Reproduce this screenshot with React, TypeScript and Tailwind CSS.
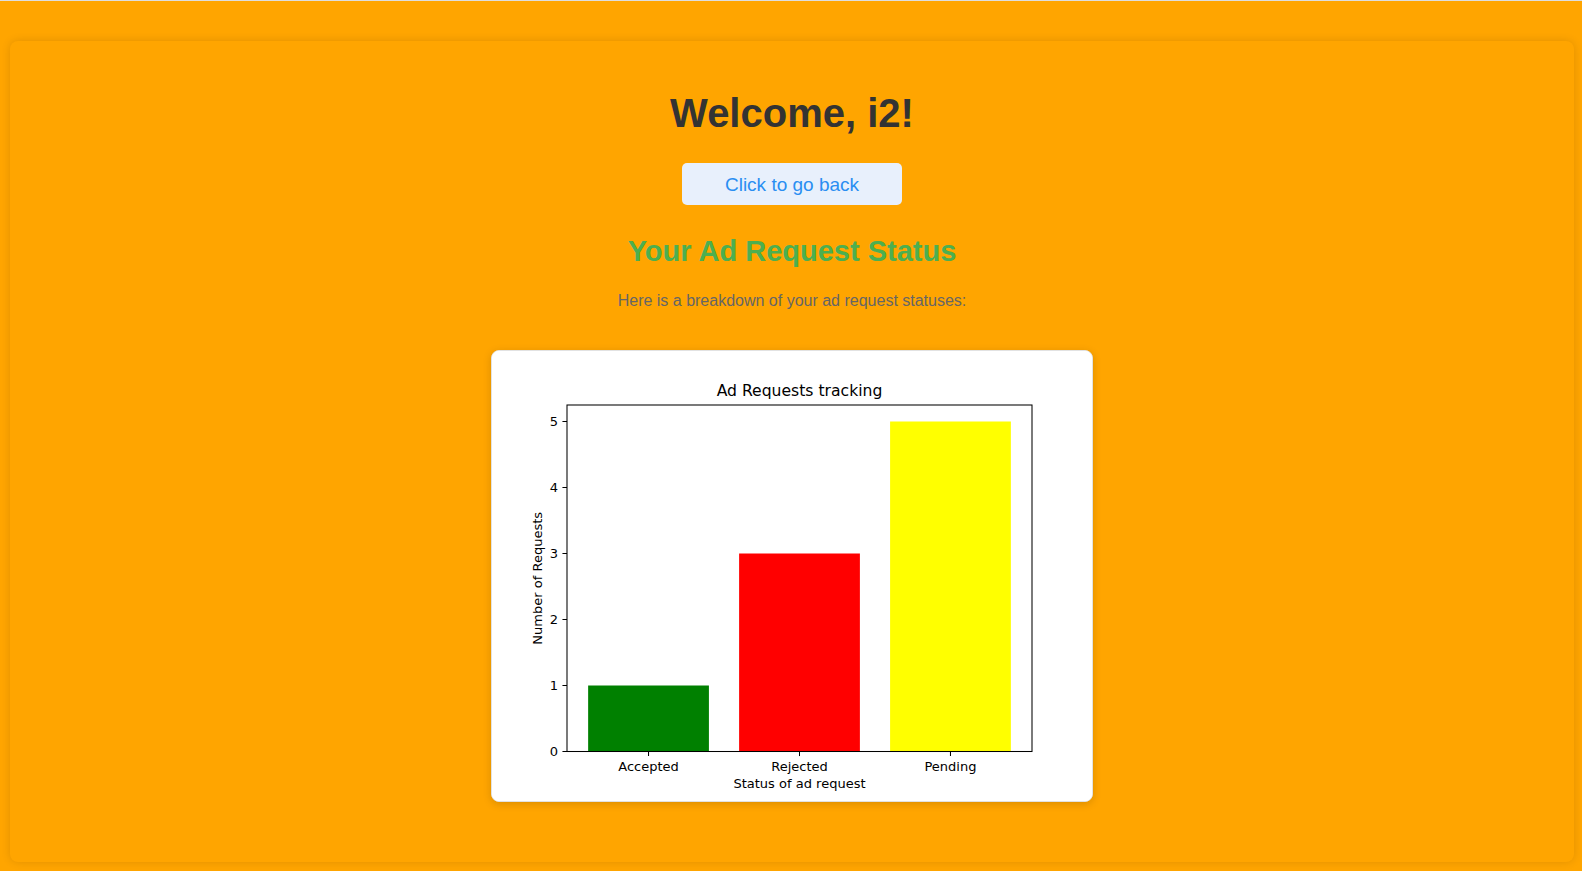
const bars = [
  { label: "Accepted", value: 1, color: "#008000" },
  { label: "Rejected", value: 3, color: "#ff0000" },
  { label: "Pending", value: 5, color: "#ffff00" },
];

// matplotlib default figure is 640x480, axes at 0.125..0.9 x 0.11..0.88
const AX_L = 80;
const AX_R = 576;
const AX_T = 57.6;
const AX_B = 427.2;
const X_MIN = -0.54;
const X_MAX = 2.54;
const Y_MAX = 5.25;

const px = (v: number) => AX_L + ((v - X_MIN) / (X_MAX - X_MIN)) * (AX_R - AX_L);
const py = (v: number) => AX_B - (v / Y_MAX) * (AX_B - AX_T);

const StatusChart = () => {
  const font = "'DejaVu Sans', sans-serif";
  return (
    <svg width={600} height={450} viewBox="0 0 640 480" className="block">
      <rect x={0} y={0} width={640} height={480} fill="#ffffff" />
      {bars.map((b, i) => (
        <rect
          key={b.label}
          x={px(i - 0.4)}
          y={py(b.value)}
          width={px(i + 0.4) - px(i - 0.4)}
          height={AX_B - py(b.value)}
          fill={b.color}
        />
      ))}
      <rect
        x={AX_L}
        y={AX_T}
        width={AX_R - AX_L}
        height={AX_B - AX_T}
        fill="none"
        stroke="#000"
        strokeWidth={1.11}
      />
      {[0, 1, 2, 3, 4, 5].map((v) => (
        <g key={v}>
          <line x1={AX_L - 4.86} x2={AX_L} y1={py(v)} y2={py(v)} stroke="#000" strokeWidth={1.11} />
          <text x={AX_L - 9.7} y={py(v) + 5} fontSize={13.89} fontFamily={font} textAnchor="end" fill="#000">
            {v}
          </text>
        </g>
      ))}
      {bars.map((b, i) => (
        <g key={b.label}>
          <line x1={px(i)} x2={px(i)} y1={AX_B} y2={AX_B + 4.86} stroke="#000" strokeWidth={1.11} />
          <text x={px(i)} y={448} fontSize={13.89} fontFamily={font} textAnchor="middle" fill="#000">
            {b.label}
          </text>
        </g>
      ))}
      <text x={(AX_L + AX_R) / 2} y={48.5} fontSize={16.67} fontFamily={font} textAnchor="middle" fill="#000">
        Ad Requests tracking
      </text>
      <text x={(AX_L + AX_R) / 2} y={466.5} fontSize={13.89} fontFamily={font} textAnchor="middle" fill="#000">
        Status of ad request
      </text>
      <text
        transform={`translate(53 ${(AX_T + AX_B) / 2}) rotate(-90)`}
        fontSize={13.89}
        fontFamily={font}
        textAnchor="middle"
        fill="#000"
      >
        Number of Requests
      </text>
    </svg>
  );
};

const App = () => {
  return (
    <div className="min-h-screen bg-[#ffa500] border-t border-[#dedede] pt-[40px] pb-[9px] font-['Liberation_Sans',Arial,sans-serif]">
      <div className="ml-[10px] mr-[8px] rounded-lg bg-[#ffa500] shadow-[0_0_10px_rgba(0,0,0,0.12)] pt-[49px] pb-[60px] flex flex-col items-center">
        <h1 className="text-[40px] leading-[46px] font-bold text-[#333333]">Welcome, i2!</h1>
        <button className="mt-[27px] w-[220px] h-[42px] rounded-[5px] bg-[#e8f0fc] text-[19px] text-[#2a8ef2] leading-none">
          Click to go back
        </button>
        <h2 className="mt-[30px] text-[29px] leading-[33px] font-bold text-[#4caf50]">Your Ad Request Status</h2>
        <p className="mt-[24px] text-base leading-[18px] text-[#666666]">
          Here is a breakdown of your ad request statuses:
        </p>
        <div className="mt-[40px] rounded-lg border border-[#e2e2e2] bg-white shadow-[0_2px_8px_rgba(0,0,0,0.15)] overflow-hidden">
          <StatusChart />
        </div>
      </div>
    </div>
  );
};

export default App;
